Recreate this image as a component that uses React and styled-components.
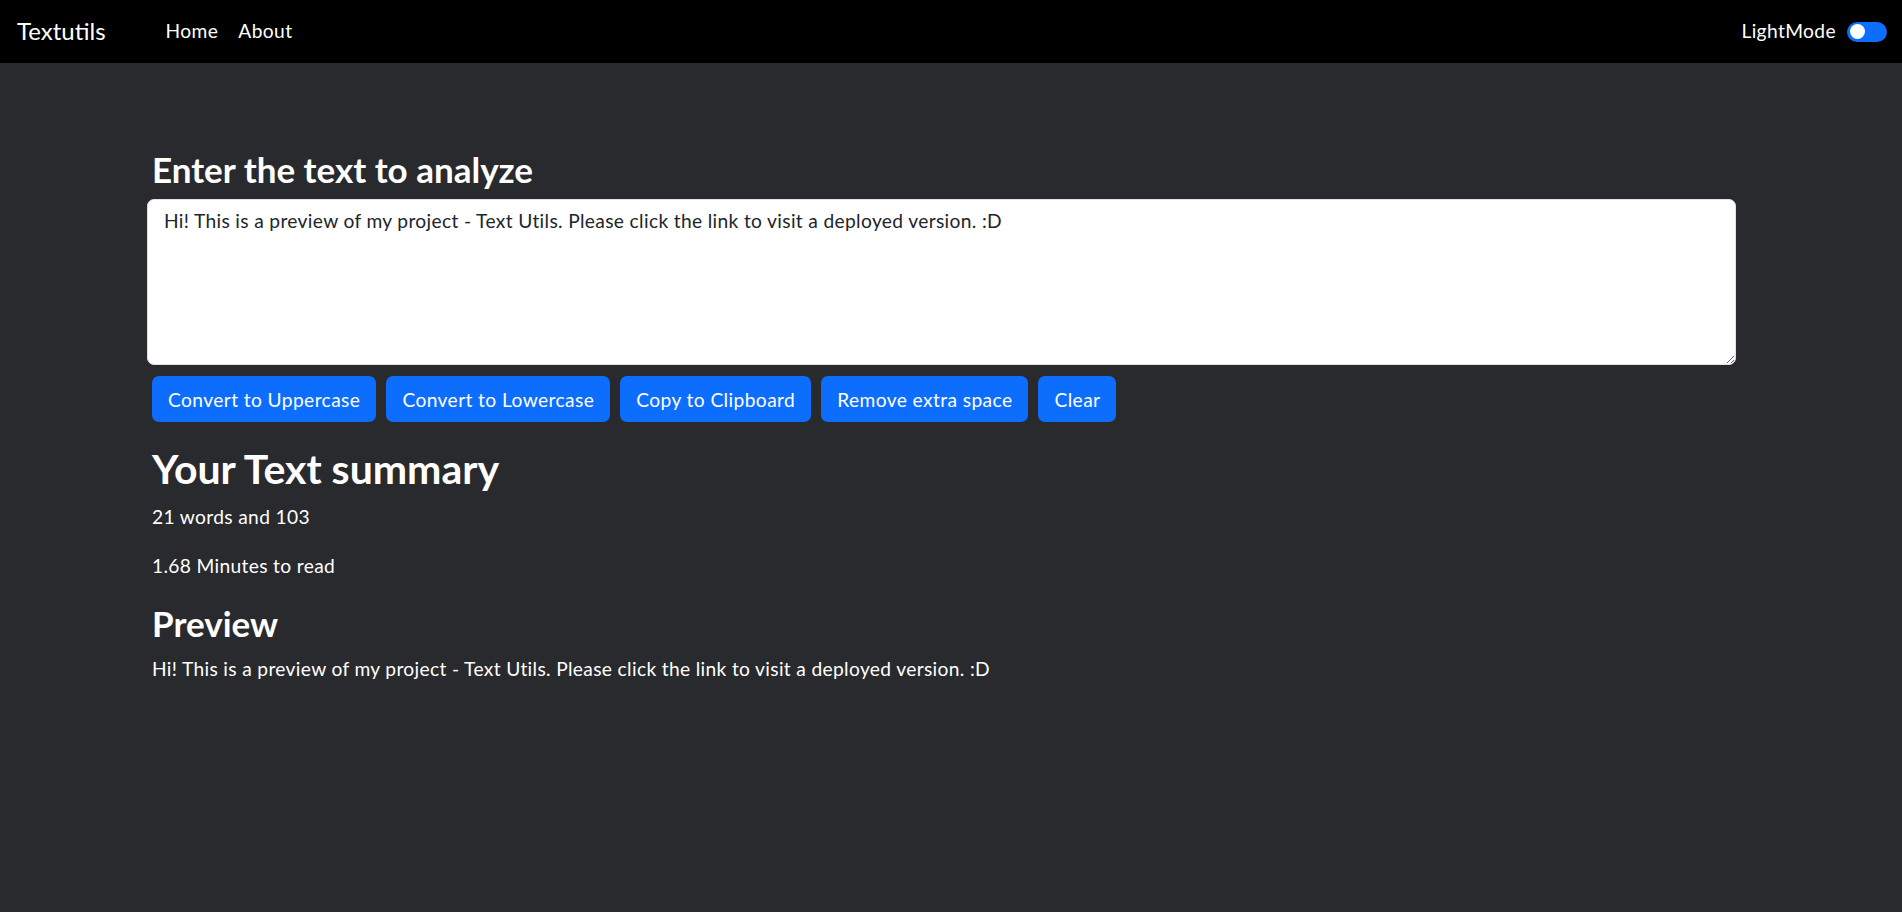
import React from 'react'
import styled, { createGlobalStyle } from 'styled-components'

const GlobalStyle = createGlobalStyle`
    html, body {
        margin: 0;
        padding: 0;
        background-color: #292a2d;
        font-family: Lato, "Liberation Sans", sans-serif;
        color: #ffffff;
    }
    * {
        box-sizing: border-box;
    }
`;

const Navbar = styled.nav`
    height: 63px;
    background-color: #000000;
    display: flex;
    align-items: center;
    padding: 0 15px 2px 17px;
`;

const Brand = styled.a`
    font-size: 24px;
    color: #ffffff;
    text-decoration: none;
    margin-right: 60px;
`;

const NavLinks = styled.div`
    display: flex;
    gap: 20px;
    flex: 1;
`;

const NavLink = styled.a`
    font-size: 19.2px;
    letter-spacing: 0.4px;
    color: #ffffff;
    text-decoration: none;
`;

const ModeToggle = styled.label`
    display: flex;
    align-items: center;
    gap: 11px;
    font-size: 19.2px;
    letter-spacing: 0.38px;
    color: #ffffff;
`;

const Switch = styled.span`
    position: relative;
    width: 40px;
    height: 20px;
    margin-top: 2px;
    border-radius: 10px;
    background-color: #0d6efd;

    &::after {
        content: '';
        position: absolute;
        left: 2.5px;
        top: 2.5px;
        width: 15px;
        height: 15px;
        border-radius: 50%;
        background-color: #ffffff;
    }
`;

const Main = styled.main`
    width: 1589px;
    margin-left: 147px;
    padding-top: 85px;
`;

const Heading = styled.h2`
    font-size: ${props => props.big ? '41px' : '35px'};
    font-weight: 700;
    line-height: 1.2;
    margin: 0 0 ${props => props.gap || '9px'} 0;
    padding-left: 5px;
`;

const TextBox = styled.textarea`
    display: block;
    width: 100%;
    height: 166px;
    padding: 7px 16px;
    border: 1px solid #dee2e6;
    border-radius: 7px;
    background-color: #ffffff;
    color: #212529;
    font-family: inherit;
    font-size: 19.2px;
    letter-spacing: 0.34px;
    line-height: 1.5;
    resize: vertical;
    outline: none;
`;

const ButtonRow = styled.div`
    display: flex;
    margin: 11px 0 22px 0;
`;

const Boton = styled.button`
    height: 46px;
    padding: 0 16px;
    margin: 0 5px;
    border: none;
    border-radius: 7px;
    background-color: #0d6efd;
    color: #ffffff;
    font-family: inherit;
    font-size: 19.2px;
    letter-spacing: 0.4px;

    &:hover {
        cursor: pointer;
    }
`;

const Parrafo = styled.p`
    font-size: 19.2px;
    letter-spacing: 0.34px;
    line-height: 1.5;
    margin: 0 0 ${props => props.gap || '20px'} 0;
    padding-left: 5px;
`;

const text = 'Hi! This is a preview of my project - Text Utils. Please click the link to visit a deployed version. :D'

const botones = ['Convert to Uppercase', 'Convert to Lowercase', 'Copy to Clipboard', 'Remove extra space', 'Clear']

const App = () => {
    return (
        <>
            <GlobalStyle />
            <Navbar>
                <Brand href="#">Textutils</Brand>
                <NavLinks>
                    <NavLink href="#">Home</NavLink>
                    <NavLink href="#">About</NavLink>
                </NavLinks>
                <ModeToggle>
                    LightMode
                    <Switch />
                </ModeToggle>
            </Navbar>
            <Main>
                <Heading>Enter the text to analyze</Heading>
                <TextBox defaultValue={text} />
                <ButtonRow>
                    {botones.map(b => <Boton key={b}>{b}</Boton>)}
                </ButtonRow>
                <Heading as="h1" big gap="10px">Your Text summary</Heading>
                <Parrafo>21 words and 103</Parrafo>
                <Parrafo gap="21px">1.68 Minutes to read</Parrafo>
                <Heading gap="11px">Preview</Heading>
                <Parrafo>{text}</Parrafo>
            </Main>
        </>
    )
}

export default App
